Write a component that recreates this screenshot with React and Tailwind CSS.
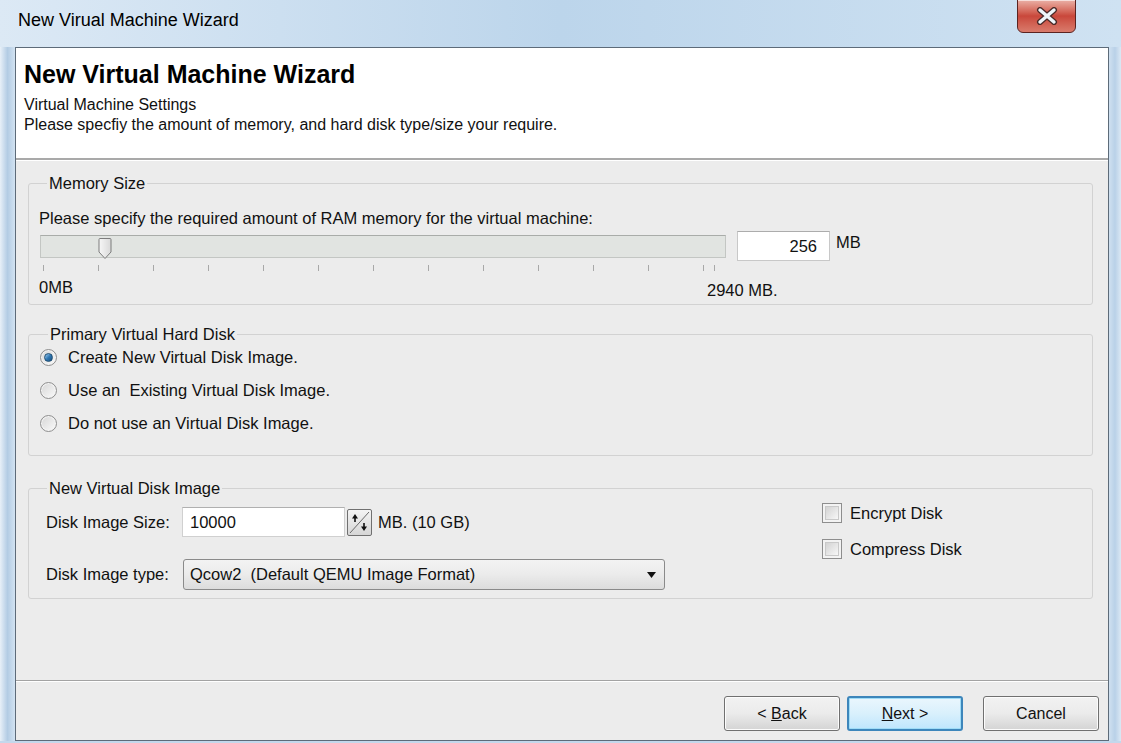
import React from "react";

const FONT = "font-['Liberation_Sans',Arial,sans-serif]";

function CloseButton() {
  return (
    <div className="mr-[45px] mt-[-1px] w-[59px] h-[34px] rounded-b-[6px] border border-[#5b2320] bg-gradient-to-b from-[#e9b0a6] via-[#c9473b] to-[#d97b6c] shadow-[inset_0_1px_0_rgba(255,255,255,0.6)] flex items-center justify-center">
      <svg width="22" height="18" viewBox="0 0 22 18">
        <path d="M4 3 L18 15 M18 3 L4 15" stroke="#4a2a28" strokeWidth="6" strokeLinecap="round" />
        <path d="M4 3 L18 15 M18 3 L4 15" stroke="#eef6fa" strokeWidth="3.4" strokeLinecap="round" />
      </svg>
    </div>
  );
}

function SliderThumb() {
  return (
    <svg className="absolute left-[57px] top-[1px]" width="14" height="23" viewBox="0 0 14 23">
      <defs>
        <linearGradient id="thumbFill" x1="0" y1="0" x2="1" y2="0">
          <stop offset="0" stopColor="#f7f7f7" />
          <stop offset="1" stopColor="#d9d9d9" />
        </linearGradient>
      </defs>
      <path d="M2 1.5 H12 Q13 1.5 13 2.5 V15 L7 21.5 L1 15 V2.5 Q1 1.5 2 1.5 Z" fill="url(#thumbFill)" stroke="#7d7d7d" strokeWidth="1" />
    </svg>
  );
}

function Ticks() {
  const xs = [];
  for (let i = 0; i < 13; i++) xs.push(4 + i * 55);
  xs.push(675);
  return (
    <svg width="690" height="8" viewBox="0 0 690 8" className="block">
      {xs.map((x, i) => (
        <line key={i} x1={x + 0.5} y1="1" x2={x + 0.5} y2="7" stroke="#a8a8a8" strokeWidth="1" />
      ))}
    </svg>
  );
}

function Radio({ checked, label }) {
  return (
    <div className="h-[24px] flex items-center">
      <span className="w-[17px] h-[17px] rounded-full border border-[#8f8f8f] bg-gradient-to-br from-[#d6d6d6] to-[#fbfbfb] flex items-center justify-center shadow-[inset_0_0_0_1px_#f4f4f4]">
        {checked && (
          <span className="w-[9px] h-[9px] rounded-full border border-[#1f4e73] bg-gradient-to-br from-[#9fd0f2] via-[#2f78b3] to-[#184f7d]" />
        )}
      </span>
      <span className="ml-[11px] text-[16.5px] leading-[18px] whitespace-pre">{label}</span>
    </div>
  );
}

function CheckBox({ label }) {
  return (
    <div className="h-[20px] flex items-center">
      <span className="w-[20px] h-[20px] border border-[#8e8e8e] bg-[#f3f3f3] flex items-center justify-center">
        <span className="w-[14px] h-[14px] border border-[#c9c9c9] bg-gradient-to-br from-[#d3d3d3] to-[#f7f7f7]" />
      </span>
      <span className="ml-[8px] text-[16.5px] leading-[18px]">{label}</span>
    </div>
  );
}

function SpinButton() {
  return (
    <div className="ml-[2px] w-[25px] h-[27px] rounded-[2px] border border-[#707070] bg-gradient-to-b from-[#f4f4f4] to-[#d6d6d6]">
      <svg width="23" height="25" viewBox="0 0 23 25" className="block">
        <line x1="2" y1="23" x2="21" y2="2" stroke="#6a6a6a" strokeWidth="1" />
        <path d="M7 4 L4 8.5 H6.2 V12 H7.8 V8.5 H10 Z" fill="#111" />
        <path d="M16 21 L13 16.5 H15.2 V13 H16.8 V16.5 H19 Z" fill="#111" />
      </svg>
    </div>
  );
}

function WizardButton({ children, primary }) {
  return (
    <div
      className={
        "w-[116px] h-[35px] rounded-[3px] flex items-center justify-center text-[16px] " +
        (primary
          ? "border-2 border-[#3d86bb] bg-gradient-to-b from-[#eaf6fd] via-[#d9f0fc] to-[#bee6fd] shadow-[inset_0_0_0_1px_#9fdcf7]"
          : "border border-[#707070] bg-gradient-to-b from-[#f2f2f2] via-[#ebebeb] to-[#d4d4d4] shadow-[inset_0_0_0_1px_#fcfcfc]")
      }
    >
      {children}
    </div>
  );
}

export default function App() {
  return (
    <div className={"w-[1121px] h-[743px] overflow-hidden flex flex-col text-[#111] bg-[#c7dcef] " + FONT}>
      {/* Title bar */}
      <div className="h-[47px] shrink-0 flex items-start bg-gradient-to-r from-[#dce9f5] via-[#bcd5eb] to-[#cfe2f2]">
        <span className="ml-[18px] mt-[9px] text-[18px] leading-[22px] text-black">New Virual Machine Wizard</span>
        <div className="ml-auto">
          <CloseButton />
        </div>
      </div>

      <div className="flex flex-1 min-h-0">
        {/* left frame */}
        <div className="w-[15px] shrink-0 bg-gradient-to-r from-[#e8f0f8] via-[#b3cce4] to-[#d3e3f2]" />

        {/* client area */}
        <div className="flex-1 flex flex-col border border-[#5d6b79] bg-[#ececec]">
          {/* header */}
          <div className="h-[112px] shrink-0 bg-white border-b-2 border-[#a9a9a9] pl-[8px] pt-[11px]">
            <div className="text-[25px] leading-[30px] font-bold text-black">New Virtual Machine Wizard</div>
            <div className="mt-[6px] text-[16px] leading-[20px]">Virtual Machine Settings</div>
            <div className="text-[16px] leading-[20px]">Please specfiy the amount of memory, and hard disk type/size your require.</div>
          </div>

          {/* body */}
          <div className="flex-1 min-h-0 pl-[12px] pr-[15px] border-t border-white">
            {/* Memory Size */}
            <fieldset className="mt-[13px] border border-[#d2d2d2] rounded-[3px] pl-[10px] pt-[17px] pb-[5px]">
              <legend className="ml-[8px] px-[2px] text-[16.5px] leading-[18px]">Memory Size</legend>
              <div className="text-[16.5px] leading-[18px]">Please specify the required amount of RAM memory for the virtual machine:</div>
              <div className="mt-[4px] flex items-center">
                <div className="relative ml-[1px] w-[686px] h-[23px] bg-[#e1e4e1] border border-[#c3c6c3] border-t-[#a9aca9]">
                  <SliderThumb />
                </div>
                <div className="ml-[11px] w-[93px] h-[30px] bg-white border border-[#c8c8c8] border-t-[#acacac] flex items-center justify-end pr-[12px] text-[16.5px]">
                  256
                </div>
                <span className="ml-[6px] text-[16.5px] -mt-[8px]">MB</span>
              </div>
              <div className="mt-[3px]">
                <Ticks />
              </div>
              <div className="mt-[6px] flex text-[16.5px] leading-[18px]">
                <span className="w-[668px]">0MB</span>
                <span className="mt-[3px]">2940 MB.</span>
              </div>
            </fieldset>

            {/* Primary Virtual Hard Disk */}
            <fieldset className="mt-[20px] border border-[#d2d2d2] rounded-[3px] pl-[11px] pt-[2px] pb-[20px]">
              <legend className="ml-[8px] px-[2px] text-[16.5px] leading-[18px]">Primary Virtual Hard Disk</legend>
              <div className="flex flex-col gap-[9px]">
                <Radio checked label="Create New Virtual Disk Image." />
                <Radio label="Use an  Existing Virtual Disk Image." />
                <Radio label="Do not use an Virtual Disk Image." />
              </div>
            </fieldset>

            {/* New Virtual Disk Image */}
            <fieldset className="mt-[23px] border border-[#d2d2d2] rounded-[3px] pl-[17px] pt-[10px] pb-[8px]">
              <legend className="ml-[1px] px-[2px] text-[16.5px] leading-[18px]">New Virtual Disk Image</legend>
              <div className="flex">
                <div className="flex flex-col">
                  <div className="h-[30px] flex items-center">
                    <span className="w-[136px] text-[16.5px]">Disk Image Size:</span>
                    <div className="w-[163px] h-[30px] bg-white border border-[#d0d0d0] border-t-[#b0b0b0] flex items-center pl-[7px] text-[16.5px]">10000</div>
                    <SpinButton />
                    <span className="ml-[6px] text-[16.5px]">MB. (10 GB)</span>
                  </div>
                  <div className="mt-[22px] h-[31px] flex items-center">
                    <span className="w-[137px] text-[16.5px]">Disk Image type:</span>
                    <div className="w-[482px] h-[31px] rounded-[3px] border border-[#8a8a8a] bg-gradient-to-b from-[#f3f3f3] via-[#ebebeb] to-[#dcdcdc] flex items-center pl-[6px] pr-[8px] text-[16.5px]">
                      <span className="flex-1 whitespace-pre">Qcow2  (Default QEMU Image Format)</span>
                      <svg width="9" height="6" viewBox="0 0 9 6">
                        <path d="M0 0 H9 L4.5 6 Z" fill="#111" />
                      </svg>
                    </div>
                  </div>
                </div>
                <div className="ml-[157px] -mt-[4px] flex flex-col gap-[16px]">
                  <CheckBox label="Encrypt Disk" />
                  <CheckBox label="Compress Disk" />
                </div>
              </div>
            </fieldset>
          </div>

          {/* footer */}
          <div className="h-[60px] shrink-0 border-t border-[#a3a3a3]">
            <div className="h-full border-t border-white flex items-start justify-end pt-[14px] pr-[9px]">
              <WizardButton>
                <span>&lt; <span className="underline">B</span>ack</span>
              </WizardButton>
              <div className="ml-[7px]">
                <WizardButton primary>
                  <span><span className="underline">N</span>ext &gt;</span>
                </WizardButton>
              </div>
              <div className="ml-[20px]">
                <WizardButton>Cancel</WizardButton>
              </div>
            </div>
          </div>
        </div>

        {/* right frame */}
        <div className="w-[12px] shrink-0 bg-gradient-to-r from-[#cfe0f0] via-[#b9d1e8] to-[#dbe8f4]" />
      </div>

      {/* bottom frame */}
      <div className="h-[2px] shrink-0 bg-[#c3d8ec]" />
    </div>
  );
}
